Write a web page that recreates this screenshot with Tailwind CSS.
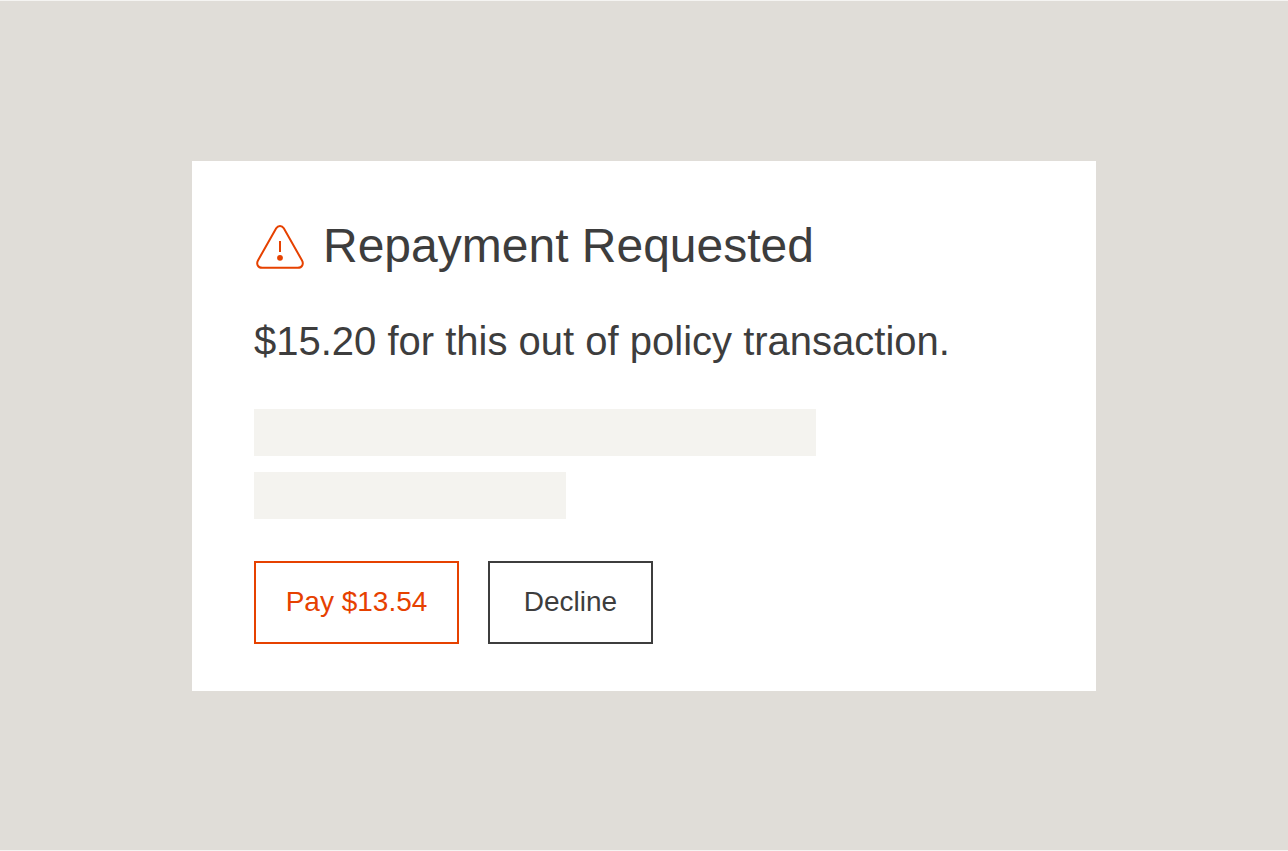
<!DOCTYPE html>
<html lang="en">
<head>
    <meta charset="UTF-8">
    <meta name="viewport" content="width=device-width, initial-scale=1.0">
    <title>Repayment Requested</title>
    <script src="https://cdn.jsdelivr.net/npm/@tailwindcss/browser@4"></script>
</head>
<body class="bg-[#e0ddd8] text-[#3d3d3d] font-['Liberation_Sans',Arial,sans-serif]">
    <main class="min-h-screen flex items-center justify-center border-y border-[#f5f4f2]">
        <section class="w-full max-w-[904px] bg-white px-[62px] pt-[61px] pb-[47px]">
            <!-- Title -->
            <div class="flex items-center gap-[17px]">
                <svg class="w-[52px] h-12 shrink-0 text-[#e64100]" viewBox="0 1 52 48" fill="none" stroke="currentColor" stroke-width="2" aria-hidden="true">
                    <path d="M22.2 7.3 C24.1 4.1 27.9 4.1 29.8 7.3 L47.9 39.2 C50 43 48.2 46.8 43.8 46.8 H8.2 C3.8 46.8 2 43 4.1 39.2 Z" stroke-linejoin="round" />
                    <path d="M26 20 V31" />
                    <circle cx="26" cy="36.8" r="2.9" fill="currentColor" stroke="none" />
                </svg>
                <h1 class="text-5xl leading-12">Repayment Requested</h1>
            </div>

            <p class="mt-[47px] text-[40px] leading-12">$15.20 for this out of policy transaction.</p>

            <!-- Placeholder lines -->
            <div class="mt-11 flex flex-col gap-4">
                <div class="h-[47px] w-full max-w-[562px] bg-[#f4f3ef]"></div>
                <div class="h-[47px] w-full max-w-[312px] bg-[#f4f3ef]"></div>
            </div>

            <!-- Actions -->
            <div class="mt-[42px] flex flex-wrap gap-[29px]">
                <button type="button" class="h-[83px] w-[205px] border-2 border-[#e64100] text-[28px] text-[#e64100]">Pay $13.54</button>
                <button type="button" class="h-[83px] w-[165px] border-2 border-[#3d3d3d] text-[28px]">Decline</button>
            </div>
        </section>
    </main>
</body>
</html>
